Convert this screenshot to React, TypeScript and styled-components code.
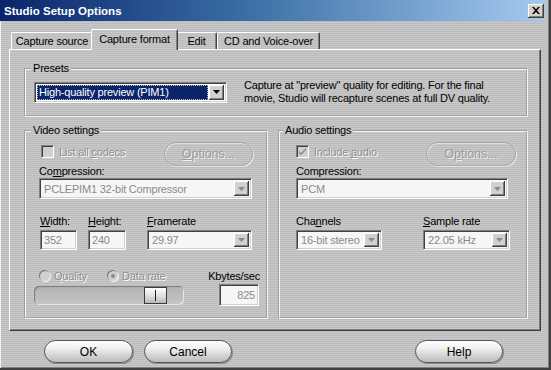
import React from 'react';
import styled, { createGlobalStyle, css } from 'styled-components';

const GlobalStyle = createGlobalStyle`
  html, body { margin: 0; padding: 0; background: #c0c0c0; }
  body { font-family: "Liberation Sans", Arial, sans-serif; font-size: 11px; letter-spacing: -0.2px; color: #000; }
  #root { width: 551px; height: 370px; }
  * { box-sizing: border-box; }
`;

const stripes = css`
  background: repeating-linear-gradient(to bottom, #c8c8c8 0px, #c8c8c8 1px, #bcbcbc 1px, #bcbcbc 2px);
`;

const sunken = css`
  border: 1px solid;
  border-color: #808080 #ffffff #ffffff #808080;
  box-shadow: inset 1px 1px 0 #404040, inset -1px -1px 0 #d4d0c8;
`;

const Window = styled.div`
  width: 551px;
  height: 370px;
  display: flex;
  flex-direction: column;
  ${stripes}
  border-right: 2px solid #404040;
  border-bottom: 2px solid #404040;
  box-shadow: inset 1px 0 0 #f0f0f0, inset -1px -1px 0 #808080;
  overflow: hidden;
`;

const TitleBar = styled.div`
  height: 21px;
  margin-right: 4px;
  display: flex;
  align-items: center;
  justify-content: space-between;
  padding: 0 1px 0 4px;
  background: linear-gradient(to right, #0a246a 0%, #3a6ea5 45%, #a6caf0 100%);
  color: #fff;
  font-weight: bold;
  font-size: 11.5px;
  letter-spacing: 0;
`;

const CloseButton = styled.div`
  width: 16px;
  height: 14px;
  display: flex;
  align-items: center;
  justify-content: center;
  background: #d4d0c8;
  box-shadow: inset -1px -1px 0 #404040, inset 1px 1px 0 #ffffff, inset -2px -2px 0 #808080;
`;

const Body = styled.div`
  flex: 1;
  display: flex;
  flex-direction: column;
  padding: 8px 8px 0 9px;
`;

const TabStrip = styled.div`
  height: 20px;
  display: flex;
  align-items: flex-end;
  padding-left: 2px;
  position: relative;
  z-index: 1;
`;

const Tab = styled.div<{ $w: number; $active?: boolean }>`
  width: ${(p) => p.$w + (p.$active ? 4 : 0)}px;
  height: ${(p) => (p.$active ? 21 : 17)}px;
  margin: 0 ${(p) => (p.$active ? -2 : 0)}px ${(p) => (p.$active ? -1 : 0)}px;
  display: flex;
  align-items: ${(p) => (p.$active ? 'flex-start' : 'center')};
  padding-top: ${(p) => (p.$active ? 3 : 0)}px;
  justify-content: center;
  border-top: 1px solid #fff;
  border-left: 1px solid #fff;
  border-right: 1px solid #404040;
  border-radius: 2px 2px 0 0;
  box-shadow: inset -1px 0 0 #808080;
  ${stripes}
  position: relative;
  z-index: ${(p) => (p.$active ? 2 : 1)};
  white-space: nowrap;
`;

const Panel = styled.div`
  height: 282px;
  border-top: 1px solid #fff;
  border-left: 1px solid #fff;
  border-right: 1px solid #404040;
  border-bottom: 1px solid #404040;
  box-shadow: inset -1px -1px 0 #808080;
  padding: 12px 12px 11px 14px;
  display: flex;
  flex-direction: column;
  gap: 7px;
`;

const Group = styled.fieldset<{ $pad: string }>`
  margin: 0;
  min-width: 0;
  border: 2px groove #f4f4f4;
  padding: ${(p) => p.$pad};
`;

const Legend = styled.legend<{ $x: number }>`
  margin-left: ${(p) => p.$x}px;
  padding: 0 2px;
  line-height: 13px;
`;

const PresetRow = styled.div`
  display: flex;
  align-items: center;
  gap: 17px;
`;

const SelectBox = styled.div<{ $w: number; $disabled?: boolean }>`
  width: ${(p) => p.$w}px;
  height: 21px;
  ${sunken}
  background: ${(p) => (p.$disabled ? '#f6f6f6' : '#ffffff')};
  display: flex;
  align-items: center;
  padding: 2px;
  color: ${(p) => (p.$disabled ? '#8a8a8a' : '#000')};
`;

const SelectText = styled.div<{ $hl?: boolean }>`
  flex: 1;
  height: 100%;
  display: flex;
  align-items: center;
  padding-left: 2px;
  background: ${(p) => (p.$hl ? '#0a246a' : 'transparent')};
  color: ${(p) => (p.$hl ? '#fff' : 'inherit')};
  outline: ${(p) => (p.$hl ? '1px dotted #c0c0c0' : 'none')};
  outline-offset: -1px;
  white-space: nowrap;
  overflow: hidden;
`;

const DropButton = styled.div`
  width: 15px;
  height: 100%;
  margin-left: 1px;
  display: flex;
  align-items: center;
  justify-content: center;
  background: #d0d0d0;
  box-shadow: inset -1px -1px 0 #404040, inset 1px 1px 0 #ffffff, inset -2px -2px 0 #808080;
`;

const Description = styled.div`
  line-height: 13px;
  white-space: nowrap;
`;

const GroupRow = styled.div`
  display: flex;
  gap: 10px;
  flex: 1;
`;

const TopRow = styled.div<{ $indent: number; $mr: number }>`
  height: 24px;
  display: flex;
  justify-content: space-between;
  padding-left: ${(p) => p.$indent}px;
  margin: 5px ${(p) => p.$mr}px 0 0;
`;

const CheckLine = styled.div`
  display: flex;
  align-items: center;
  gap: 5px;
  height: 13px;
  margin-top: 3px;
`;

const CheckBox = styled.div`
  width: 13px;
  height: 13px;
  ${sunken}
  background: #cfcfcf;
  display: flex;
  align-items: center;
  justify-content: center;
`;

const DisabledText = styled.span`
  color: #8e8e8e;
  text-shadow: 1px 1px 0 #ffffff;
  white-space: nowrap;
`;

const Key = styled.span`
  text-decoration: underline;
`;

const PillButton = styled.div<{ $w: number; $disabled?: boolean }>`
  width: ${(p) => p.$w}px;
  height: ${(p) => (p.$disabled ? 24 : 23)}px;
  border-radius: 12px;
  display: flex;
  align-items: center;
  justify-content: center;
  font-size: ${(p) => (p.$disabled ? 12.5 : 12)}px;
  letter-spacing: 0;
  ${(p) =>
    p.$disabled
      ? css`
          border: 1px solid #a6a6a6;
          box-shadow: inset 1px 1px 0 #e2e2e2, 1px 1px 0 #e8e8e8;
          color: #9a9a9a;
          text-shadow: 1px 1px 0 #f2f2f2;
        `
      : css`
          border: 1px solid #555;
          background: linear-gradient(to bottom, #ffffff 0%, #f0f0f0 35%, #d2d2d2 70%, #bdbdbd 100%);
          box-shadow: inset 0 1px 0 #ffffff, 1px 1px 0 #8a8a8a;
          color: #000;
        `}
`;

const FieldLabel = styled.div<{ $mt?: number; $ml?: number }>`
  line-height: 12px;
  margin-top: ${(p) => p.$mt ?? 0}px;
  margin-left: ${(p) => p.$ml ?? 0}px;
  white-space: nowrap;
`;

const FieldGrid = styled.div<{ $cols: string; $ml?: number }>`
  display: grid;
  grid-template-columns: ${(p) => p.$cols};
  row-gap: 3px;
  margin-top: 16px;
  margin-left: ${(p) => p.$ml ?? 0}px;
`;

const TextField = styled.div<{ $align?: string; $h?: number; $w: number; $ml?: number }>`
  width: ${(p) => p.$w}px;
  height: ${(p) => p.$h ?? 20}px;
  margin-left: ${(p) => p.$ml ?? 0}px;
  ${sunken}
  background: #f6f6f6;
  color: #8a8a8a;
  display: flex;
  align-items: center;
  justify-content: ${(p) => p.$align ?? 'flex-start'};
  padding: 0 3px;
`;

const RateGrid = styled.div`
  display: grid;
  grid-template-columns: 1fr auto;
  grid-template-rows: 13px 22px;
  row-gap: 2px;
  margin-top: 19px;
  align-items: center;
  justify-items: end;
`;

const RadioRow = styled.div`
  display: flex;
  align-items: center;
  justify-self: start;
`;

const RadioItem = styled.div<{ $w: number }>`
  width: ${(p) => p.$w}px;
  display: flex;
  align-items: center;
  gap: 4px;
`;

const Radio = styled.div<{ $on?: boolean }>`
  width: 11px;
  height: 11px;
  border-radius: 50%;
  background: #d0d0d0;
  box-shadow: inset 1px 1px 0 #7a7a7a, 1px 1px 0 #f4f4f4;
  display: flex;
  align-items: center;
  justify-content: center;
  &::after {
    content: '';
    display: ${(p) => (p.$on ? 'block' : 'none')};
    width: 4px;
    height: 4px;
    border-radius: 50%;
    background: #8a8a8a;
  }
`;

const RightLabel = styled.div`
  white-space: nowrap;
`;

const Slider = styled.div`
  width: 150px;
  height: 19px;
  margin-left: -5px;
  justify-self: start;
  border-radius: 5px;
  background: linear-gradient(to bottom, #b2b2b2, #c6c6c6);
  box-shadow: inset 1px 1px 1px #7c7c7c, inset -1px -1px 0 #e6e6e6;
  display: flex;
  align-items: center;
  padding-left: 110px;
`;

const Thumb = styled.div`
  width: 23px;
  height: 17px;
  border: 1px solid #3a3a3a;
  background: linear-gradient(to bottom, #ffffff, #dadada 60%, #b8b8b8);
  display: flex;
  justify-content: center;
  padding: 2px 0;
  &::after {
    content: '';
    width: 1px;
    background: #202020;
  }
`;

const ButtonRow = styled.div`
  display: flex;
  align-items: center;
  padding: 9px 0 0 35px;
  gap: 11px;
`;

const Spacer = styled.div`
  flex: 1;
`;

const Arrow = ({ color }: { color: string }) => (
  <svg width="7" height="4" viewBox="0 0 7 4">
    <path d="M0 0h7L3.5 4z" fill={color} />
  </svg>
);

const Check = () => (
  <svg width="9" height="9" viewBox="0 0 9 9">
    <path d="M1 4l2 2 5-5v2L3 8 1 6z" fill="#8a8a8a" />
  </svg>
);

const Dropdown = ({ w, text, h }: { w: number; text: string; h?: number }) => (
  <SelectBox $w={w} $disabled style={h ? { height: h } : undefined}>
    <SelectText>{text}</SelectText>
    <DropButton>
      <Arrow color="#8a8a8a" />
    </DropButton>
  </SelectBox>
);

export default function App() {
  return (
    <>
      <GlobalStyle />
      <Window>
        <TitleBar>
          <span>Studio Setup Options</span>
          <CloseButton>
            <svg width="8" height="7" viewBox="0 0 8 7">
              <path d="M0 0h2l2 2.2L6 0h2L5 3.5 8 7H6L4 4.8 2 7H0l3-3.5z" fill="#000" />
            </svg>
          </CloseButton>
        </TitleBar>
        <Body>
          <TabStrip>
            <Tab $w={82}>Capture source</Tab>
            <Tab $w={83} $active>Capture format</Tab>
            <Tab $w={41}>Edit</Tab>
            <Tab $w={103}>CD and Voice-over</Tab>
          </TabStrip>
          <Panel>
            <Group $pad="4px 10px 10px 8px">
              <Legend $x={-3}>Presets</Legend>
              <PresetRow>
                <SelectBox $w={193}>
                  <SelectText $hl>High-quality preview (PIM1)</SelectText>
                  <DropButton>
                    <Arrow color="#000" />
                  </DropButton>
                </SelectBox>
                <Description>
                  Capture at "preview" quality for editing. For the final
                  <br />
                  movie, Studio will recapture scenes at full DV quality.
                </Description>
              </PresetRow>
            </Group>
            <GroupRow>
              <Group $pad="0 6px 0 13px" style={{ width: 244 }}>
                <Legend $x={-8}>Video settings</Legend>
                <TopRow $indent={2} $mr={7}>
                  <CheckLine>
                    <CheckBox />
                    <DisabledText>
                      List all <Key>c</Key>odecs
                    </DisabledText>
                  </CheckLine>
                  <PillButton $w={89} $disabled>
                    <Key>O</Key>ptions...
                  </PillButton>
                </TopRow>
                <FieldLabel $mt={-1}>
                  Co<Key>m</Key>pression:
                </FieldLabel>
                <div style={{ marginTop: 1 }}>
                  <Dropdown w={213} text="PCLEPIM1 32-bit Compressor" />
                </div>
                <FieldGrid $cols="37px 49px 126px" $ml={1}>
                  <FieldLabel>
                    <Key>W</Key>idth:
                  </FieldLabel>
                  <FieldLabel $ml={11}>
                    <Key>H</Key>eight:
                  </FieldLabel>
                  <FieldLabel $ml={21}>
                    <Key>F</Key>ramerate
                  </FieldLabel>
                  <TextField $w={37}>352</TextField>
                  <TextField $w={38} $ml={11}>
                    240
                  </TextField>
                  <div style={{ marginLeft: 21 }}>
                    <Dropdown w={105} h={20} text="29.97" />
                  </div>
                </FieldGrid>
                <RateGrid>
                  <RadioRow>
                    <RadioItem $w={68}>
                      <Radio />
                      <DisabledText>Quality</DisabledText>
                    </RadioItem>
                    <RadioItem $w={90}>
                      <Radio $on />
                      <DisabledText>Data rate</DisabledText>
                    </RadioItem>
                  </RadioRow>
                  <RightLabel>Kbytes/sec</RightLabel>
                  <Slider>
                    <Thumb />
                  </Slider>
                  <TextField $align="flex-end" $h={22} $w={40} style={{ marginRight: 1 }}>
                    825
                  </TextField>
                </RateGrid>
              </Group>
              <Group $pad="0 17px 0 16px" style={{ flex: 1 }}>
                <Legend $x={-13}>Audio settings</Legend>
                <TopRow $indent={0} $mr={-7}>
                  <CheckLine>
                    <CheckBox>
                      <Check />
                    </CheckBox>
                    <DisabledText>
                      Include <Key>a</Key>udio
                    </DisabledText>
                  </CheckLine>
                  <PillButton $w={90} $disabled>
                    O<Key>p</Key>tions...
                  </PillButton>
                </TopRow>
                <FieldLabel $mt={-1}>Compression:</FieldLabel>
                <div style={{ marginTop: 1 }}>
                  <Dropdown w={212} text="PCM" />
                </div>
                <FieldGrid $cols="127px 87px">
                  <FieldLabel>
                    Cha<Key>n</Key>nels
                  </FieldLabel>
                  <FieldLabel>
                    <Key>S</Key>ample rate
                  </FieldLabel>
                  <Dropdown w={86} h={20} text="16-bit stereo" />
                  <Dropdown w={87} h={20} text="22.05 kHz" />
                </FieldGrid>
              </Group>
            </GroupRow>
          </Panel>
          <ButtonRow>
            <PillButton $w={89}>OK</PillButton>
            <PillButton $w={88}>Cancel</PillButton>
            <Spacer />
            <PillButton $w={88} style={{ marginRight: 38 }}>
              Help
            </PillButton>
          </ButtonRow>
        </Body>
      </Window>
    </>
  );
}
